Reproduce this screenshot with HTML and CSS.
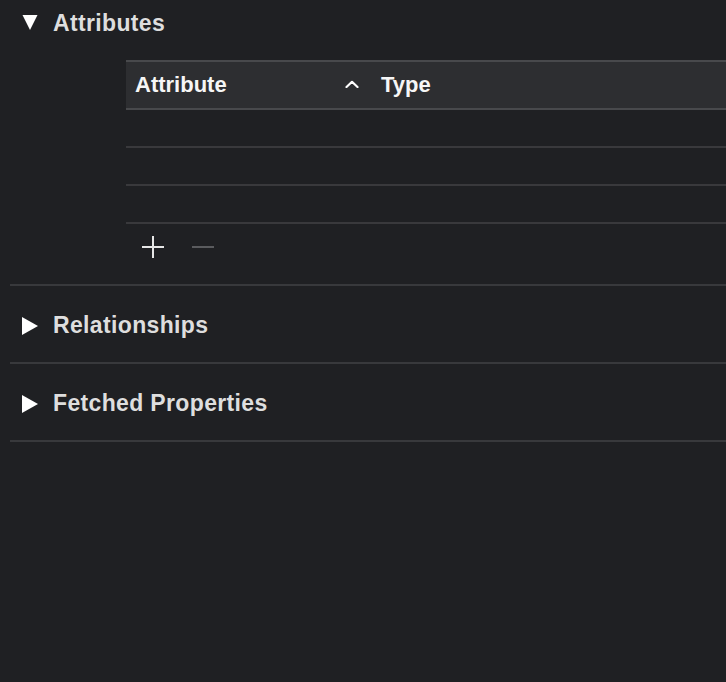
FILE: index.html
```html
<!DOCTYPE html>
<html>
<head>
<meta charset="utf-8">
<link rel="stylesheet" href="styles.css">
</head>
<body>
<div class="panel">
  <section class="section open">
    <div class="sec-head first">
      <svg class="tri" width="16" height="16" viewBox="0 0 16 16"><polygon points="0.5,1 15.5,1 8,16" fill="#fff"/></svg>
      <span class="sec-title">Attributes</span>
    </div>
    <div class="table">
      <div class="thead">
        <div class="th col-attr">
          <span>Attribute</span>
          <svg class="chev" width="14" height="8" viewBox="0 0 14 8"><polyline points="1.5,7 7,1.8 12.5,7" fill="none" stroke="#fff" stroke-width="2.2" stroke-linecap="round" stroke-linejoin="round"/></svg>
        </div>
        <div class="th col-type">Type</div>
      </div>
      <div class="row"></div>
      <div class="row"></div>
      <div class="row"></div>
    </div>
    <div class="tools">
      <svg class="btn" width="22" height="22" viewBox="0 0 22 22"><rect x="10" y="0" width="2" height="22" fill="#e6e6e6"/><rect x="0" y="10" width="22" height="2" fill="#e6e6e6"/></svg>
      <svg class="btn" width="22" height="22" viewBox="0 0 22 22"><rect x="0" y="10" width="22" height="2" fill="#5a5b5e"/></svg>
    </div>
  </section>
  <section class="section">
    <div class="sec-head">
      <svg class="tri" width="16" height="18" viewBox="0 0 16 18"><polygon points="0,0 16,9 0,18" fill="#fff"/></svg>
      <span class="sec-title">Relationships</span>
    </div>
  </section>
  <section class="section">
    <div class="sec-head">
      <svg class="tri" width="16" height="18" viewBox="0 0 16 18"><polygon points="0,0 16,9 0,18" fill="#fff"/></svg>
      <span class="sec-title">Fetched Properties</span>
    </div>
  </section>
</div>
</body>
</html>
```
FILE: styles.css
```css
html, body {
  margin: 0;
  padding: 0;
  background: #1f2023;
  height: 100%;
}
body {
  font-family: "Liberation Sans", Arial, sans-serif;
  overflow: hidden;
}
.panel {
  padding-left: 10px;
}
.section {
  border-bottom: 2px solid #38393c;
}
.sec-head {
  box-sizing: border-box;
  height: 76px;
  padding-top: 3px;
  display: flex;
  align-items: center;
  padding-left: 12px;
}
.sec-head.first {
  height: 44px;
  padding-top: 2px;
}
.tri {
  display: block;
  flex: none;
}
.sec-head.first .tri {
  margin-top: -2px;
}
.sec-title {
  margin-left: 15px;
  font-size: 23px;
  font-weight: bold;
  color: #dedede;
  letter-spacing: 0.35px;
}
.table {
  margin-left: 116px;
  margin-top: 16px;
  border-top: 2px solid #48494c;
}
.thead {
  height: 46px;
  background: #2d2e31;
  border-bottom: 2px solid #48494c;
  display: flex;
  align-items: center;
  font-size: 22px;
  font-weight: bold;
  color: #f6f6f6;
}
.th {
  display: flex;
  align-items: center;
}
.col-attr {
  box-sizing: border-box;
  width: 233px;
  padding-left: 9px;
  justify-content: space-between;
}
.chev {
  display: block;
  margin-top: -2px;
}
.col-type {
  padding-left: 22px;
}
.row {
  height: 36px;
  border-bottom: 2px solid #39393c;
}
.tools {
  box-sizing: border-box;
  height: 60px;
  display: flex;
  align-items: flex-start;
  gap: 28px;
  padding-top: 12px;
  padding-left: 132px;
}
.btn {
  display: block;
}
```
